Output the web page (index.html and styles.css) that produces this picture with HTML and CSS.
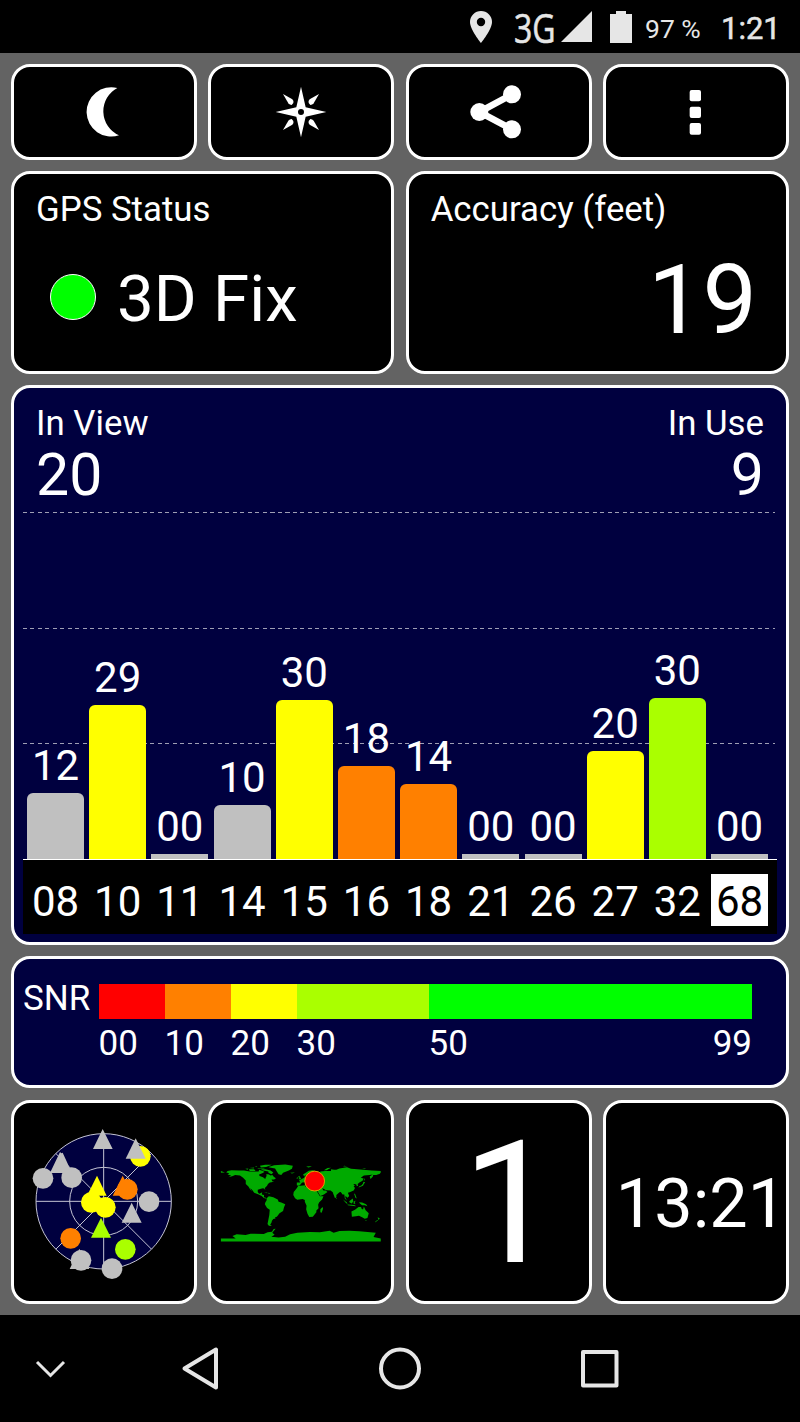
FILE: index.html
```html
<!DOCTYPE html>
<html lang="en">

<head>
    <meta charset="UTF-8">
    <meta name="viewport" content="width=device-width, initial-scale=1.0">
    <title>GPS Test</title>
    <link rel="stylesheet" href="styles.css">
</head>

<body>
    <header class="status-bar">
        <svg class="status-pin" viewBox="0 0 22 32">
            <path fill-rule="evenodd" d="M11 0A11 11 0 0 0 0 11C0 18.500 11 32 11 32S22 18.500 22 11A11 11 0 0 0 11 0ZM11 6.800A4.200 4.200 0 1 1 11 15.200A4.200 4.200 0 1 1 11 6.800Z" />
        </svg>
        <span class="network">3G</span>
        <svg class="status-signal" viewBox="0 0 31 31"><path d="M31 0V31H0Z" /></svg>
        <svg class="status-battery" viewBox="0 0 22 32"><path d="M6 0H16V3H22V32H0V3H6Z" /></svg>
        <span class="battery-level">97 %</span>
        <span class="status-time">1:21</span>
    </header>

    <main class="dashboard">
        <div class="row row-tools">
            <button class="card" aria-label="Night mode">
                <svg class="tool-icon" viewBox="0 0 180 180">
                    <path d="M130 18A74 74 0 1 0 135 160A79 79 0 0 1 130 18Z" />
                </svg>
            </button>
            <button class="card" aria-label="Compass">
                <svg class="tool-icon" viewBox="0 0 180 180">
                    <path fill-rule="evenodd" d="M90 14L104 76L166 90L104 104L90 166L76 104L14 90L76 76ZM90 81A9 9 0 1 0 90 99A9 9 0 1 0 90 81Z" />
                    <path d="M36 36L64 52Q69 57 67 63L62 69Q56 69 52 64Z" />
                    <path d="M144 36L116 52Q111 57 113 63L118 69Q124 69 128 64Z" />
                    <path d="M36 144L64 128Q69 123 67 117L62 111Q56 111 52 116Z" />
                    <path d="M144 144L116 128Q111 123 113 117L118 111Q124 111 128 116Z" />
                </svg>
            </button>
            <button class="card" aria-label="Share">
                <svg class="tool-icon" viewBox="0 0 180 180">
                    <path class="share-link" d="M129 37L31 90L129 142" />
                    <circle cx="31" cy="90" r="27" />
                    <circle cx="129" cy="37" r="27" />
                    <circle cx="129" cy="142" r="27" />
                </svg>
            </button>
            <button class="card" aria-label="Menu">
                <svg class="tool-icon" viewBox="0 0 180 180">
                    <rect x="71" y="24" width="34" height="34" rx="6" />
                    <rect x="71" y="74" width="34" height="34" rx="6" />
                    <rect x="71" y="123" width="34" height="35" rx="6" />
                </svg>
            </button>
        </div>

        <div class="row row-status">
            <section class="card info-card">
                <h2 class="label">GPS Status</h2>
                <div class="fix">
                    <span class="fix-light"></span>
                    <span class="fix-text">3D Fix</span>
                </div>
            </section>
            <section class="card info-card">
                <h2 class="label">Accuracy (feet)</h2>
                <div class="accuracy">19</div>
            </section>
        </div>

        <section class="card chart-card">
            <div class="counts">
                <div class="count">
                    <div class="label">In View</div>
                    <div class="count-value">20</div>
                </div>
                <div class="count count-right">
                    <div class="label">In Use</div>
                    <div class="count-value">9</div>
                </div>
            </div>
            <div class="plot">
                <div class="sat"><span>12</span><div class="bar gray" style="height: 66px"></div></div>
                <div class="sat"><span>29</span><div class="bar yellow" style="height: 154px"></div></div>
                <div class="sat"><span>00</span><div class="bar gray empty"></div></div>
                <div class="sat"><span>10</span><div class="bar gray" style="height: 54px"></div></div>
                <div class="sat"><span>30</span><div class="bar yellow" style="height: 159px"></div></div>
                <div class="sat"><span>18</span><div class="bar orange" style="height: 93px"></div></div>
                <div class="sat"><span>14</span><div class="bar orange" style="height: 75px"></div></div>
                <div class="sat"><span>00</span><div class="bar gray empty"></div></div>
                <div class="sat"><span>00</span><div class="bar gray empty"></div></div>
                <div class="sat"><span>20</span><div class="bar yellow" style="height: 108px"></div></div>
                <div class="sat"><span>30</span><div class="bar lime" style="height: 161px"></div></div>
                <div class="sat"><span>00</span><div class="bar gray empty"></div></div>
            </div>
            <div class="sat-ids">
                <span>08</span>
                <span>10</span>
                <span>11</span>
                <span>14</span>
                <span>15</span>
                <span>16</span>
                <span>18</span>
                <span>21</span>
                <span>26</span>
                <span>27</span>
                <span>32</span>
                <span class="selected">68</span>
            </div>
        </section>

        <section class="card snr-card">
            <div class="snr-name">SNR</div>
            <div class="snr-scale">
                <div class="snr-step"><div class="swatch red"></div><span>00</span></div>
                <div class="snr-step"><div class="swatch orange"></div><span>10</span></div>
                <div class="snr-step"><div class="swatch yellow"></div><span>20</span></div>
                <div class="snr-step"><div class="swatch lime"></div><span>30</span></div>
                <div class="snr-step"><div class="swatch green"></div><span>50</span><span>99</span></div>
            </div>
        </section>

        <div class="row row-views">
            <button class="card sky-card" aria-label="Sky view">
                <svg class="sky" viewBox="0 0 510 510">
                    <g class="sky-grid">
                        <circle class="sky-disc" cx="251" cy="247" r="203" />
                        <circle cx="251" cy="247" r="102" />
                        <path d="M48 247H454M251 44V450M107 103L395 391M107 391L395 103" />
                    </g>
                    <g class="fill-gray">
                        <path d="M248 30L278 90H219ZM120 99L124 103L128 101L156 162H90ZM335 251L365 311H305ZM178 389L208 450H149Z" />
                        <circle cx="69" cy="178" r="31" />
                        <circle cx="155" cy="176" r="31" />
                        <circle cx="387" cy="248" r="31" />
                        <circle cx="183" cy="424" r="31" />
                        <circle cx="276" cy="449" r="31" />
                    </g>
                    <g class="fill-yellow">
                        <circle cx="361" cy="112" r="31" />
                        <path d="M231 170L260 230H201Z" />
                        <circle cx="214" cy="250" r="31" />
                        <circle cx="256" cy="265" r="31" />
                    </g>
                    <path class="fill-gray" d="M347 58L377 119H317Z" />
                    <g class="fill-orange">
                        <path d="M308 170L338 230H278Z" />
                        <circle cx="322" cy="211" r="31" />
                        <circle cx="152" cy="358" r="31" />
                    </g>
                    <g class="fill-lime">
                        <path d="M243 296L273 356H213Z" />
                        <circle cx="316" cy="391" r="31" />
                    </g>
                </svg>
            </button>
            <button class="card world-card" aria-label="World map">
                <svg class="world" viewBox="0 0 540 330">
                    <!-- land is drawn in lon/lat degrees -->
                    <g class="land" transform="translate(272.5 158) scale(1.347 -1.347)">
                        <path d="M-168 66L-165 69L-156 71L-140 70L-128 70L-115 68L-108 68L-95 68L-94 72L-85 69L-82 67L-87 64L-94 61L-93 58L-85 55L-82 52L-79 52L-79 55L-77 58L-78 62L-73 62L-68 59L-64 60L-61 56L-56 53L-60 50L-66 50L-64 46L-60 46L-66 44L-70 43L-74 40L-76 36L-81 31L-80 26L-82 29L-85 30L-90 29L-97 27L-97 22L-94 18L-91 19L-87 21L-88 16L-83 15L-83 10L-79 9L-77 8L-80 7L-84 9L-88 13L-95 16L-105 20L-109 26L-114 31L-110 23L-115 29L-118 34L-124 40L-124 48L-130 54L-137 59L-148 60L-153 58L-163 55L-157 59L-165 61L-161 64Z" />
                        <path d="M-73 78L-60 82L-35 83.500L-18 81L-20 74L-27 70L-40 65L-44 60L-50 62L-54 68L-58 75L-70 77Z" />
                        <path d="M-90 73L-80 73L-68 70L-62 66L-66 62L-73 65L-73 68L-85 70ZM-117 73L-105 73L-102 69L-115 69ZM-90 77L-92 81L-80 83L-65 83L-78 78ZM-125 74L-118 75L-120 72ZM-116 76L-105 77L-106 75ZM-98 76L-82 76L-82 74.500L-96 74.500ZM-104 79L-98 80L-100 78ZM-180 69L-171 66L-180 65Z" />
                        <path d="M-77 8L-72 12L-62 10L-52 5L-50 0L-44 -2L-35 -6L-38 -13L-40 -21L-48 -26L-54 -34L-58 -35L-57 -38L-62 -39L-65 -43L-66 -47L-69 -52L-65 -55L-72 -54L-75 -50L-73 -40L-71 -30L-70 -18L-76 -14L-81 -6L-80 -2L-77 3Z" />
                        <path d="M-17 15L-16 22L-10 29L-6 35.500L10 37L11 33L20 32L25 31.500L32 31L35 27L38 20L43 12L51 12L48 5L41 -2L39 -7L40 -15L35 -20L35 -24L31 -29L27 -34L19 -34.500L15 -27L12 -17L13 -9L9 0L9 4L4 6L-8 4.500L-13 8ZM44 -17L49 -12L50 -16L47 -25L44 -24Z" />
                        <path d="M-9 37L-9 43L-1 43.500L-4 48L2 51L8 54L8 57L11 57L12 54L20 55L24 58L30 60L22 60L21 63L25 65L21 65L17 61L18 58L14 55.500L11 59L7 58L5 61L12 66L18 69.500L27 71L41 67L33 66L37 64L44 66L44 68L55 69L68 69L68 73L75 72L80 72L87 75L104 77.500L113 74L127 73L140 72L160 70L180 69L180 66L178 63L170 60L163 60L162 56L157 51L155 57L162 61L155 60L142 59L135 54L141 52L139 47L132 43L128 40L129 36L126 34.500L125 39L121 40L118 39L122 37L119 35L122 31L119 25L110 21L106 20L109 13L105 9L101 13L100 10L104 2L99 8L98 16L94 16L90 22L87 21L80 15L80 10L77 8L73 18L72 21L67 25L57 26L51 29L48 30L51 25L56 25L60 22L52 16L44 13L39 21L35 28L35 36L27 37L27 40L36 41.500L41 42L38 47L31 46L28 42L24 40L22 37L19 41L13 45.500L18 40L16 38L9 44L3 43L0 40L-2 37L-6 36Z" />
                        <path d="M-5 50L1 51L-2 56L-4 58.500L-6 56L-3 54ZM-10 52L-6 52L-6 55L-9 54ZM-24 65L-15 66L-14 65L-20 63.500ZM12 79L20 80L25 79L17 77ZM52 71L58 71L68 76.500L60 76ZM95 80L105 79L98 81ZM138 75L148 75L143 73.500Z" />
                        <path d="M130 32L136 34L140 36L142 40L145 44L141 45L140 41L137 37L131 34ZM95 5L104 -2L105 -6L100 -1ZM105 -6.500L114 -7L122 -8L124 -10L114 -9L106 -8ZM109 1L117 7L118 1L115 -4L110 -2ZM119 -5L119 1L125 2L121 0L123 -4ZM131 -1L138 -2L147 -6L150 -10L144 -8L138 -8L133 -4ZM120 18L122 18L126 7L123 9ZM-84 22L-75 20L-76 19L-82 21ZM-73 20L-68 18.500L-73 18ZM80 9L82 7L80 6ZM142 46L144 50L142 54Z" />
                        <path d="M114 -22L122 -18L130 -12L136 -12L136 -15L140 -17.500L142 -11L146 -19L153 -26L150 -37L144 -38.500L138 -35L131 -31.500L124 -33L115 -34ZM145 -41L148 -41L147 -43.500ZM173 -35L178 -38L175 -41ZM172 -41L174 -42L168 -46.500L167 -45.500Z" />
                    </g>
                    <path class="land" d="M30 270H75L65 262L78 257L105 259L120 255L160 256L172 251L185 249L190 241L196 240L186 252L193 258L183 264L205 267L225 264L240 257L262 252L300 250L330 251L360 246L372 252L390 247L420 246L450 248L500 252L493 265L515 270V279H30Z" />
                    <circle class="position" cx="314.500" cy="95.500" r="30" />
                </svg>
            </button>
            <button class="card speed">1</button>
            <button class="card clock">13:21</button>
        </div>
    </main>

    <nav class="nav-bar">
        <svg class="nav-hide" viewBox="0 0 100 107"><path d="M37 47L50.500 60.500L64 47" /></svg>
        <svg class="nav-key" viewBox="0 0 200 107"><path d="M116 34.500V72.500L84.500 53.500Z" /></svg>
        <svg class="nav-key" viewBox="0 0 200 107"><circle cx="100" cy="53.500" r="19" /></svg>
        <svg class="nav-key" viewBox="0 0 200 107"><rect x="83" y="37" width="33.500" height="33.500" /></svg>
    </nav>
</body>

</html>
```

FILE: styles.css
```css
:root {
    --navy: #00003f;
    --frame: #636363;
    --gray: #c0c0c0;
    --red: #ff0000;
    --orange: #ff8000;
    --yellow: #ffff00;
    --lime: #aaff00;
    --green: #00ff00;
}

* {
    margin: 0;
    padding: 0;
    box-sizing: border-box;
}

body {
    background-color: #000;
    color: #fff;
    font-family: Roboto, sans-serif;
    width: 800px;
    height: 1422px;
    overflow: hidden;
}

svg {
    display: block;
    flex: none;
}

/* Android status bar */
.status-bar {
    display: flex;
    align-items: center;
    height: 53px;
    padding-left: 470px;
    color: #e6e6e6;
    fill: #e6e6e6;
    white-space: nowrap;
}

.status-pin {
    width: 22px;
    height: 32px;
}

.network {
    width: 54px;
    margin-left: 22px;
    margin-right: -7px;
    padding-top: 2px;
    font-family: "Open Sans", sans-serif;
    font-size: 41px;
    line-height: 53px;
    transform: scaleX(0.78);
    transform-origin: left;
    -webkit-text-stroke: 0.6px #e6e6e6;
}

.status-signal {
    width: 31px;
    height: 31px;
}

.status-battery {
    width: 22px;
    height: 32px;
    margin-left: 18px;
}

.battery-level {
    width: 76px;
    padding: 3px 0 0 13px;
    font-size: 26.5px;
}

.status-time {
    margin-left: 13px;
    padding-top: 3px;
    font-size: 31px;
    -webkit-text-stroke: 0.5px #e6e6e6;
}

/* Dashboard */
.dashboard {
    display: flex;
    flex-direction: column;
    gap: 11px;
    height: 1262px;
    padding: 11px;
    background-color: var(--frame);
}

.row {
    display: grid;
    gap: 11.33px;
}

.row-tools,
.row-views {
    grid-template-columns: repeat(4, 1fr);
}

.row-tools {
    height: 96px;
}

.row-status {
    grid-template-columns: repeat(2, 1fr);
    height: 203px;
}

.row-views {
    height: 204px;
    margin-top: 1px;
}

.card {
    min-width: 0;
    background-color: #000;
    border: 3px solid #fff;
    border-radius: 19px;
    color: inherit;
    font-family: inherit;
}

button.card {
    display: flex;
    align-items: center;
    justify-content: center;
}

.label {
    font-size: 34.8px;
    font-weight: 400;
    line-height: 40px;
}

.tool-icon {
    width: 60px;
    height: 60px;
    fill: #fff;
}

.share-link {
    fill: none;
    stroke: #fff;
    stroke-width: 20;
}

/* GPS status and accuracy */
.info-card {
    padding: 15px 29px 0 22px;
}

.fix {
    display: flex;
    align-items: center;
    height: 66px;
    margin-top: 35px;
    padding-left: 14px;
}

.fix-light {
    width: 46px;
    height: 46px;
    margin-right: 21px;
    background-color: var(--green);
    border: 1px solid #fff;
    border-radius: 50%;
}

.fix-text {
    padding-top: 4px;
    font-size: 65.5px;
    line-height: 66px;
}

.accuracy {
    margin-top: 22px;
    font-size: 97px;
    line-height: 99px;
    text-align: right;
}

/* Satellite chart */
.chart-card {
    height: 561px;
    padding: 0 9px;
    background-color: var(--navy);
}

.counts {
    display: flex;
    justify-content: space-between;
    height: 124px;
    padding: 15px 13px 0;
}

.count-right {
    text-align: right;
}

.count-value {
    font-size: 59px;
    line-height: 64px;
}

.plot {
    --dash: repeating-linear-gradient(90deg, #9e9eb4 0 4px, transparent 4px 7.5px);
    display: flex;
    gap: 5.2px;
    height: 348px;
    padding: 0 9px 0 4px;
    border-bottom: 1px solid #fff;
    background: var(--dash) 0 0 / 752px 1px no-repeat,
        var(--dash) 0 116px / 752px 1px no-repeat,
        var(--dash) 0 231px / 752px 1px no-repeat;
}

.sat {
    display: flex;
    flex: 1 1 0;
    flex-direction: column;
    align-items: center;
    justify-content: flex-end;
    font-size: 42px;
    line-height: 42px;
}

.sat span {
    margin-bottom: 6px;
}

.bar {
    width: 100%;
    border-radius: 6px 6px 0 0;
}

.bar.empty {
    height: 5px;
    border-radius: 0;
}

.gray { background-color: var(--gray); }
.red { background-color: var(--red); }
.orange { background-color: var(--orange); }
.yellow { background-color: var(--yellow); }
.lime { background-color: var(--lime); }
.green { background-color: var(--green); }

.sat-ids {
    display: flex;
    gap: 5.2px;
    height: 74px;
    padding: 14px 9px 8px 4px;
    background-color: #000;
    font-size: 42px;
    line-height: 55px;
}

.sat-ids span {
    flex: 1 1 0;
    text-align: center;
}

.sat-ids .selected {
    background-color: #fff;
    color: #000;
}

/* SNR legend */
.snr-card {
    display: flex;
    height: 132px;
    padding: 25px 34px 0 9px;
    background-color: var(--navy);
    font-size: 35px;
}

.snr-name {
    width: 75.5px;
    line-height: 29px;
}

.snr-scale {
    display: grid;
    flex: 1;
    grid-template-columns: 66px 66px 66px 132px 1fr;
}

.snr-step {
    display: flex;
    flex-wrap: wrap;
    align-content: flex-start;
    justify-content: space-between;
    line-height: 50px;
}

.swatch {
    width: 100%;
    height: 35px;
}

/* Bottom views */
.sky-card {
    padding: 4px 0 0 2px;
}

.sky {
    width: 170px;
    height: 170px;
}

.sky-grid {
    fill: none;
    stroke: #c4c4d4;
    stroke-width: 3;
}

.sky-disc {
    fill: var(--navy);
}

.fill-gray { fill: var(--gray); }
.fill-orange { fill: var(--orange); }
.fill-yellow { fill: var(--yellow); }
.fill-lime { fill: var(--lime); }

.world-card {
    padding: 4px 2px 0 0;
}

.world {
    width: 178px;
    height: 110px;
}

.land {
    fill: #00aa00;
}

.position {
    fill: var(--red);
    stroke: #e0a000;
    stroke-width: 3;
}

.speed {
    padding: 4px 0 0 23px;
    font-size: 171px;
    line-height: 194px;
}

.clock {
    padding: 3px 0 0 10px;
    font-size: 68.4px;
}

/* Android navigation bar */
.nav-bar {
    display: flex;
    height: 107px;
    fill: none;
    stroke: #e6e6e6;
    stroke-linejoin: round;
    stroke-width: 4;
}

.nav-hide {
    width: 100px;
    height: 107px;
    stroke-width: 3;
    stroke-linejoin: miter;
}

.nav-key {
    width: 200px;
    height: 107px;
}
```
